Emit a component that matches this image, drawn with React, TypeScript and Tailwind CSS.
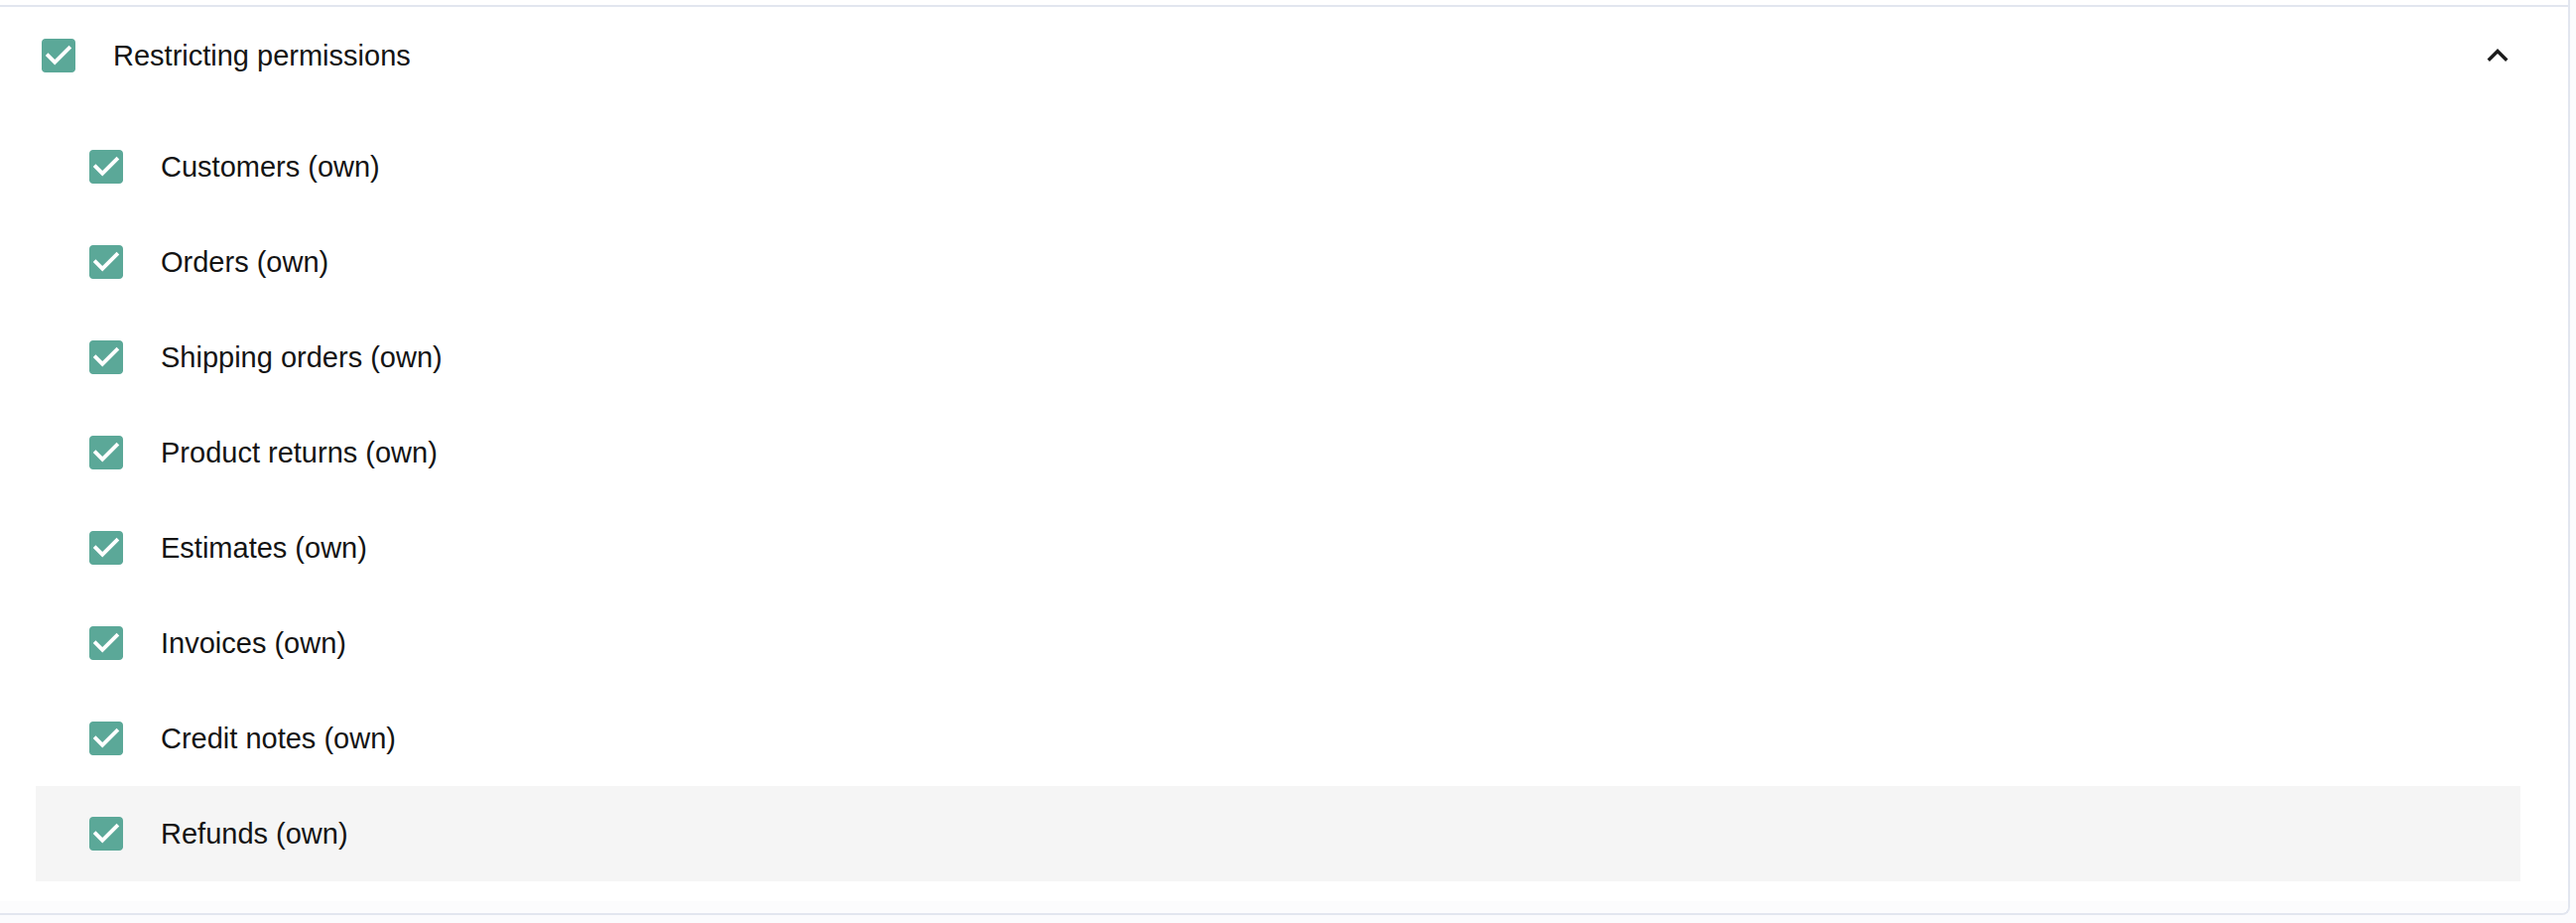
import React from "react";

const items = [
  "Customers (own)",
  "Orders (own)",
  "Shipping orders (own)",
  "Product returns (own)",
  "Estimates (own)",
  "Invoices (own)",
  "Credit notes (own)",
  "Refunds (own)",
];

function CheckedBox() {
  return (
    <svg width="34" height="34" viewBox="3 3 18 18" className="shrink-0">
      <path
        fill="#5ba898"
        d="M19 3H5c-1.11 0-2 .9-2 2v14c0 1.1.89 2 2 2h14c1.11 0 2-.9 2-2V5c0-1.1-.89-2-2-2z"
      />
      <path fill="#ffffff" d="M10 17l-5-5 1.41-1.41L10 14.17l7.59-7.59L19 8l-9 9z" />
    </svg>
  );
}

function ExpandLess() {
  return (
    <svg width="42" height="42" viewBox="0 0 24 24" className="shrink-0">
      <path fill="#1c1c1c" d="M12 8l-6 6 1.41 1.41L12 10.83l4.59 4.58L18 14z" />
    </svg>
  );
}

export default function App() {
  return (
    <div
      className="w-[2596px] h-[930px] bg-[#fbfbfd] text-[#141414]"
      style={{ fontFamily: '"Liberation Sans", Arial, Helvetica, sans-serif' }}
    >
      <div className="w-[2590px] h-[922px] bg-white border-r-2 border-b-2 border-[#e2e6ef] rounded-br-[8px] flex flex-col">
        <div className="mt-[5px] h-[2px] bg-[#e2e6ef]" />
        <div className="h-[98px] flex items-center pl-[42px] pr-[50px]">
          <CheckedBox />
          <span className="ml-[38px] text-[29px] leading-none">Restricting permissions</span>
          <div className="ml-auto">
            <ExpandLess />
          </div>
        </div>
        <div className="pt-[15px] pl-[36px] pr-[48px]">
          {items.map((label, i) => (
            <div
              key={label}
              className={
                "h-[96px] flex items-center pl-[54px] " +
                (i === items.length - 1 ? "bg-[#f5f5f5]" : "")
              }
            >
              <CheckedBox />
              <span className="ml-[38px] text-[29px] leading-none">{label}</span>
            </div>
          ))}
        </div>
        <div className="flex-1 mt-[20px] bg-[#fcfcfd] rounded-br-[8px]" />
      </div>
    </div>
  );
}
